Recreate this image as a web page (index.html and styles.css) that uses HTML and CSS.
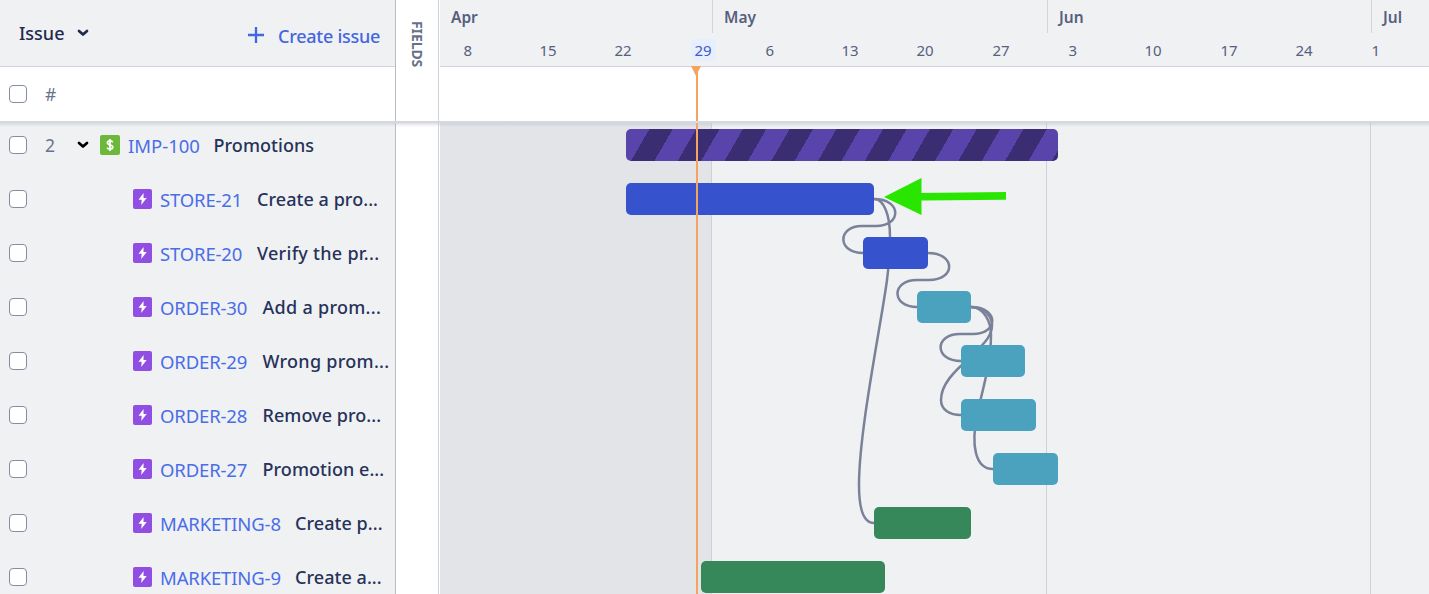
FILE: index.html
```html
<!DOCTYPE html>
<html lang="en">
<head>
<meta charset="utf-8">
<title>Promotions plan</title>
<link rel="stylesheet" href="styles.css">
</head>
<body>
<svg class="defs" aria-hidden="true">
  <symbol id="epic" viewBox="0 0 19 20"><rect width="19" height="20" rx="2" fill="#904ee2"/><path d="M10.600 4 5.500 10.700h3.200l-.5 5.300 5.500-7h-3.200z" fill="#fff"/></symbol>
  <symbol id="chevron" viewBox="0 0 12 8"><path d="M2 2l4 3.600L10 2" fill="none" stroke="currentColor" stroke-width="2.700" stroke-linecap="round" stroke-linejoin="round"/></symbol>
</svg>
<main class="plan">
  <section class="scope">
    <header class="scope-head">
      <span class="issue-label">Issue</span>
      <svg class="chevron"><use href="#chevron"/></svg>
      <span class="create"><svg class="plus" viewBox="0 0 16 16"><path d="M8 0v16M0 8h16" stroke="currentColor" stroke-width="2.300"/></svg>Create issue</span>
    </header>
    <div class="scope-sub"><i class="check"></i><span class="num">#</span></div>
    <div class="rows">
      <div class="row parent"><i class="check"></i><span class="num">2</span><svg class="chevron"><use href="#chevron"/></svg><svg class="icon money" viewBox="0 0 20 20"><rect width="20" height="20" rx="2" fill="#6cb83a"/><path d="M12.700 7.300c-.4-.9-1.400-1.400-2.700-1.400-1.600 0-2.600.8-2.600 1.900 0 2.900 5.400 1.500 5.400 4.300 0 1.300-1.200 2-2.800 2-1.400 0-2.500-.5-2.900-1.500M10 3.900v12.200" fill="none" stroke="#fff" stroke-width="1.700"/></svg><span class="key">IMP-100</span><span class="title">Promotions</span></div>
      <div class="row"><i class="check"></i><svg class="icon"><use href="#epic"/></svg><span class="key store">STORE-21</span><span class="title">Create a pro...</span></div>
      <div class="row"><i class="check"></i><svg class="icon"><use href="#epic"/></svg><span class="key store">STORE-20</span><span class="title wide">Verify the pr...</span></div>
      <div class="row"><i class="check"></i><svg class="icon"><use href="#epic"/></svg><span class="key order">ORDER-30</span><span class="title wide">Add a prom...</span></div>
      <div class="row"><i class="check"></i><svg class="icon"><use href="#epic"/></svg><span class="key order">ORDER-29</span><span class="title wide">Wrong prom...</span></div>
      <div class="row"><i class="check"></i><svg class="icon"><use href="#epic"/></svg><span class="key order">ORDER-28</span><span class="title">Remove pro...</span></div>
      <div class="row"><i class="check"></i><svg class="icon"><use href="#epic"/></svg><span class="key order">ORDER-27</span><span class="title">Promotion e...</span></div>
      <div class="row"><i class="check"></i><svg class="icon"><use href="#epic"/></svg><span class="key market">MARKETING-8</span><span class="title">Create p...</span></div>
      <div class="row"><i class="check"></i><svg class="icon"><use href="#epic"/></svg><span class="key market">MARKETING-9</span><span class="title">Create a...</span></div>
    </div>
  </section>
  <aside class="fields"><span>FIELDS</span></aside>
  <section class="timeline">
    <header class="axis">
      <div class="months"><span>Apr</span><span>May</span><span>Jun</span><span>Jul</span></div>
      <div class="weeks"><span>8</span><span>15</span><span>22</span><span><b>29</b></span><span>6</span><span>13</span><span>20</span><span>27</span><span>3</span><span>10</span><span>17</span><span>24</span><span>1</span></div>
    </header>
    <div class="axis-sub"></div>
    <div class="chart"><i></i><i></i><i></i><i></i></div>
    <svg class="links" viewBox="440 0 989 594">
      <g fill="none" stroke="#7a8299" stroke-width="2.500">
        <path d="M874 199C902 199 902 226 876 226H862C837 226 837 253 863 253"/>
        <path d="M874 199C884 199 890 215 890 237C890 262 888 269 887 280C881 325 859 430 859 485C859 510 864 523 874 523"/>
        <path d="M928 253C956 253 956 280 929 280H917C891 280 891 307 917 307"/>
        <path d="M971 307C999 307 999 334 973 334H960C934 334 934 361 961 361"/>
        <path d="M971 307C985 307 992 317 992 325C992 337 983 344 972 356C953 372 941 385 941 400C941 410 950 415 961 415"/>
        <path d="M971 307C984 307 991 322 991 335C991 365 981 395 977 415C971 445 975 469 993 469"/>
      </g>
      <path d="M884 197L921.500 178V193L1006 192V199.700L921.500 200.500V215Z" fill="#29e600"/>
    </svg>
    <div class="bar striped" style="left:186px;top:129px;width:432px"></div>
    <div class="bar blue" style="left:186px;top:183px;width:248px"></div>
    <div class="bar blue" style="left:423px;top:237px;width:65px"></div>
    <div class="bar teal" style="left:477px;top:291px;width:54px"></div>
    <div class="bar teal" style="left:521px;top:345px;width:64px"></div>
    <div class="bar teal" style="left:521px;top:399px;width:75px"></div>
    <div class="bar teal" style="left:553px;top:453px;width:65px"></div>
    <div class="bar green" style="left:434px;top:507px;width:97px"></div>
    <div class="bar green" style="left:261px;top:561px;width:183.500px"></div>
    <div class="today"></div>
  </section>
  <div class="head-shadow"></div>
</main>
</body>
</html>
```
FILE: styles.css
```css
* { box-sizing: border-box; }
body { margin: 0; overflow: hidden; background: #fff; font-family: "Noto Sans", "Open Sans", sans-serif; }
.defs { position: absolute; width: 0; height: 0; }
.plan { position: relative; width: 1429px; height: 594px; display: grid; grid-template-columns: 396px 43px 989px; overflow: hidden; }
.scope { height: 594px; overflow: hidden; border-right: 1px solid #b9bbc7; background: #f0f1f3; }
.scope-head { height: 67px; display: flex; align-items: center; padding-left: 19px; border-bottom: 1px solid #cfd1db; color: #1f2a4d; }
.issue-label { width: 58px; font-size: 18px; font-weight: 500; letter-spacing: 0; }
.chevron { width: 12px; height: 8px; flex: none; }
.create { display: flex; align-items: center; gap: 14px; margin: 5px 0 0 159px; color: #4466e0; font-size: 18px; font-weight: 500; white-space: nowrap; letter-spacing: -.25px; }
.plus { width: 16px; height: 16px; margin-top: -2px; }
.scope-sub { height: 55px; display: flex; align-items: center; padding: 0 0 2px 9px; background: #fff; }
.check { flex: none; width: 18px; height: 18px; border: 1.500px solid #858da3; border-radius: 4px; background: #fff; }
.num { width: 32px; margin-left: 18px; color: #6b7389; font-size: 17.500px; }
.rows { margin-top: -4px; }
.row { height: 54px; display: flex; align-items: center; padding-left: 9px; white-space: nowrap; }
.icon { flex: none; width: 19px; height: 20px; margin-left: 106px; margin-right: 8px; }
.money { width: 20px; margin-left: 11px; }
.key { width: 97px; color: #4a6de8; font-size: 18.500px; letter-spacing: -.15px; }
.parent .key { width: 85.500px; letter-spacing: 0; }
.order { width: 102.500px; }
.market { width: 135px; }
.title { color: #27325a; font-size: 18px; font-weight: 500; letter-spacing: .05px; }
.title.wide { letter-spacing: .28px; }
.fields { display: flex; padding: 21px 0 0 11px; border-right: 1px solid #cfd1db; background: #fff; }
.fields span { writing-mode: vertical-rl; height: 50px; color: #68718a; font-size: 14px; font-weight: 700; line-height: 20px; letter-spacing: -.1px; }
.timeline { position: relative; width: 989px; height: 594px; margin-left: 1px; }
.axis { height: 67px; background: #f0f1f3; border-bottom: 1px solid #cfd1db; color: #56607e; }
.months { height: 33px; display: grid; grid-template-columns: 272px 335px 324px 58px; grid-template-rows: 33px; font-size: 15.500px; font-weight: 600; line-height: 35px; }
.months span { padding-left: 11px; border-left: 1px solid #d3d5dd; }
.months span:first-child { border: 0; }
.weeks { display: grid; grid-template-columns: 76px 75px 80px 71px 76px 75px 76px 76px 76px 76px 75px 76px 40px; padding-left: 23.500px; font-size: 15px; line-height: 22px; padding-top: 6px; }
.weeks b { font-weight: 400; display: inline-block; padding: 0 4px; margin-left: -4px; border-radius: 3px; background: #e7efff; color: #4059d0; }
.axis-sub { height: 55px; background: #fff; }
.chart { height: 472px; display: grid; grid-template-columns: 272px 335px 324px 58px; background: #f0f1f3; }
.chart i { border-right: 1px solid #cfd1d9; }
.chart i:first-child { background: #e3e4e8; }
.chart i:last-child { border: 0; }
.links { position: absolute; left: 0; top: 0; width: 989px; height: 594px; }
.bar { position: absolute; height: 32px; border-radius: 5px; }
.striped { background: repeating-linear-gradient(120deg, #5844aa 0 20.250px, #3a2d72 20.250px 40.500px); }
.blue { background: #3652cd; }
.teal { background: #4ba2bf; }
.green { background: #36885a; }
.today { position: absolute; left: 256px; top: 66px; width: 2px; height: 528px; background: #f4a360; }
.today::before { content: ""; position: absolute; left: -5px; top: 0; border: 5px solid transparent; border-top: 10px solid #f4a360; border-bottom: 0; }
.head-shadow { position: absolute; left: 0; right: 0; top: 121px; height: 6px; background: linear-gradient(#d6d8df 0 2px, rgba(190,193,206,.5) 2px, rgba(200,203,214,0)); }
```
